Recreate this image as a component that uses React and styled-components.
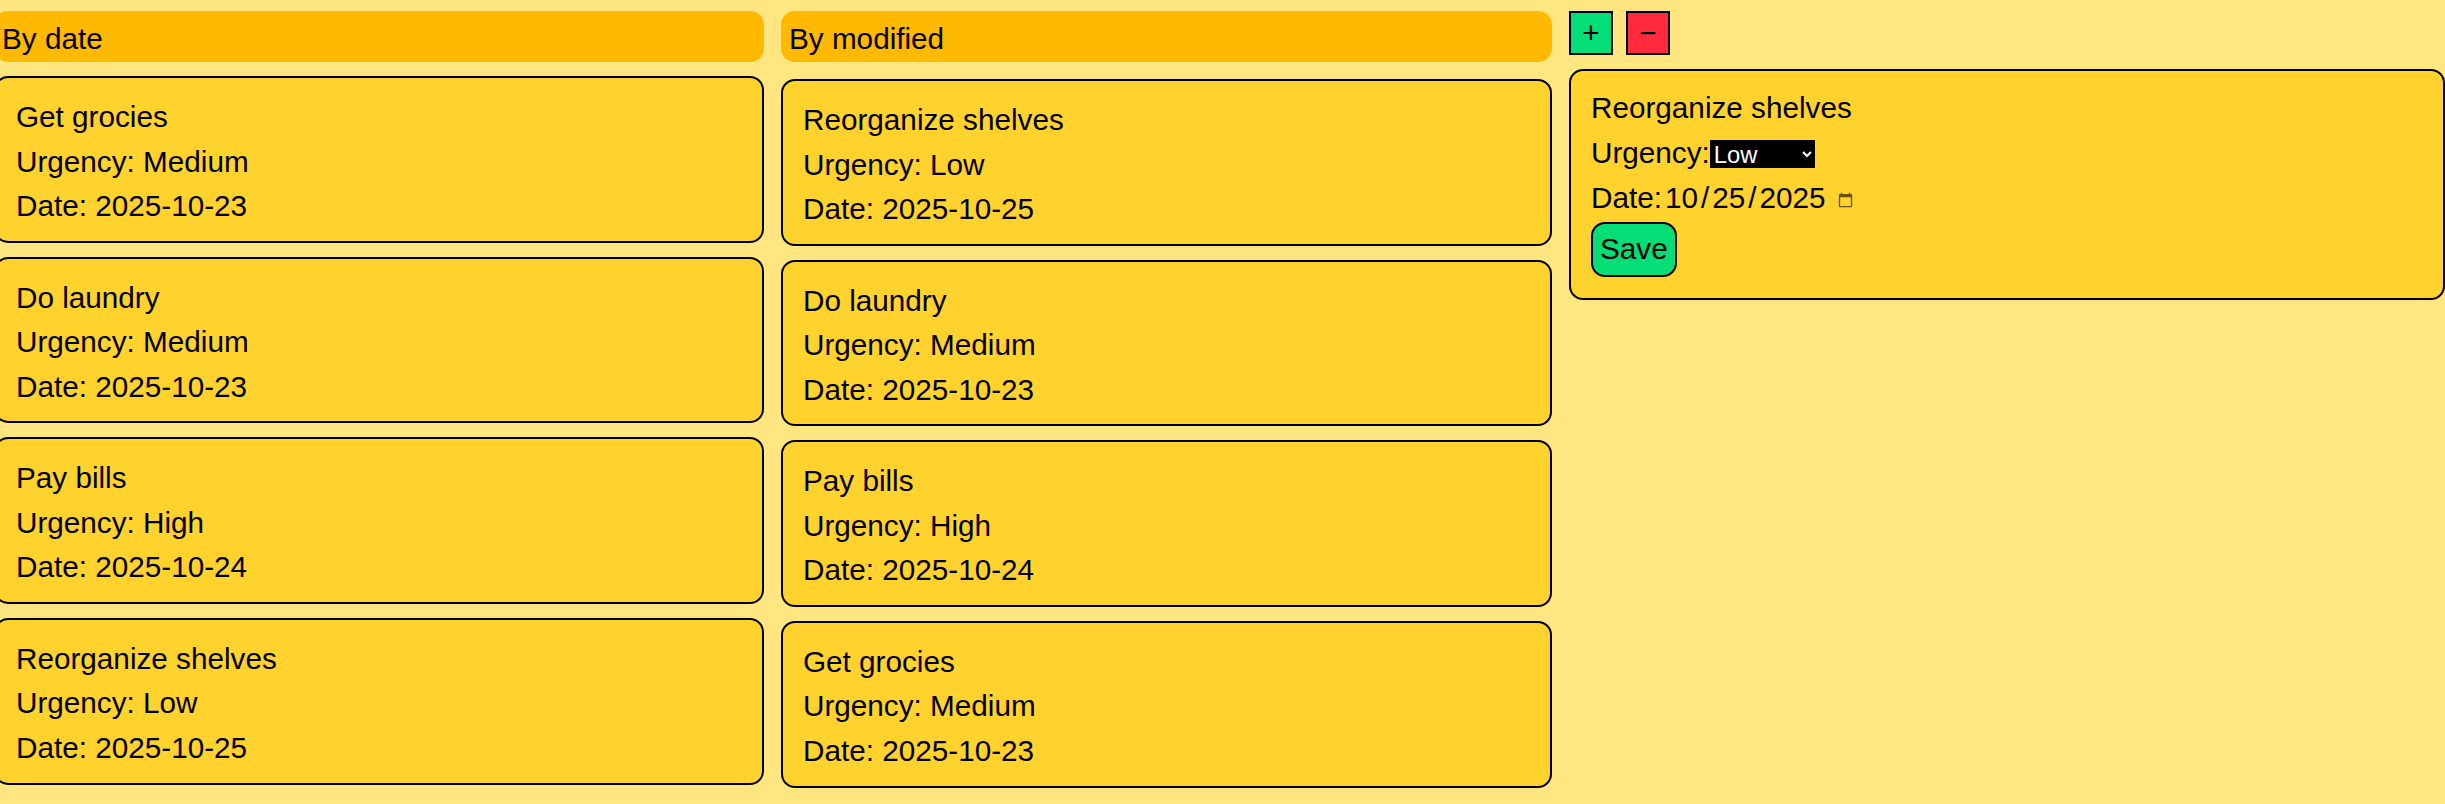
import React, { useState } from 'react'
import styled, { createGlobalStyle } from 'styled-components'

const GlobalStyle = createGlobalStyle`
  html, body {
    margin: 0;
    padding: 0;
    background: #ffe680;
  }
  body {
    font-family: "Liberation Sans", Arial, sans-serif;
    font-size: 29.7px;
    line-height: 1.5;
    color: #000;
    overflow: hidden;
  }
`

const Board = styled.div`
  display: grid;
  grid-template-columns: 770px 771px 876px;
  column-gap: 17px;
  align-items: start;
  margin-left: -6px;
  padding-top: 11px;
`

const Column = styled.section`
  display: flex;
  flex-direction: column;
`

const ColumnHeader = styled.h2`
  margin: 0;
  height: 51px;
  box-sizing: border-box;
  padding: 6px 8px 0;
  background: #ffb900;
  border-radius: 14px;
  font-size: inherit;
  font-weight: normal;
  line-height: 1.5;
`

const CardList = styled.div`
  display: flex;
  flex-direction: column;
  gap: 14px;
  margin-top: ${(p) => p.$offset || 14}px;
`

const Card = styled.div`
  background: #ffd22e;
  border: 2px solid #000;
  border-radius: 14px;
  padding: ${(p) => (p.$editing ? '15px 20px 21px' : '17px 20px 12px')};
`

const Line = styled.div`
  display: flex;
  align-items: baseline;
  white-space: nowrap;
`

const Toolbar = styled.div`
  display: flex;
  gap: 13px;
  margin-bottom: 14px;
`

const SquareButton = styled.button`
  width: 44px;
  height: 44px;
  padding: 0;
  border: 2px solid #000;
  border-radius: 0;
  background: ${(p) => (p.$danger ? '#ff2b3c' : '#05dd77')};
  color: #000;
  font-family: inherit;
  font-size: 29.7px;
  line-height: 1;
  cursor: pointer;
`

const UrgencySelect = styled.select`
  font-family: inherit;
  font-size: 23.8px;
  background: #000;
  color: #fff;
  border: none;
  border-radius: 0;
  padding: 0;
  margin: 0;
  height: 28px;
`

const DateInput = styled.input`
  font-family: inherit;
  font-size: 29.7px;
  background: transparent;
  border: none;
  padding: 0 0 0 2px;
  margin: 0;
  width: 190px;
  color: #000;
  line-height: 1.5;

  &::-webkit-datetime-edit-text {
    padding: 0 2px;
  }
  &::-webkit-calendar-picker-indicator {
    width: 17px;
    height: 18px;
    padding: 0;
    margin: 5px 0 0 0;
    opacity: 0.6;
  }
`

const SaveButton = styled.button`
  height: 55px;
  padding: 0 7px;
  background: #05dd77;
  border: 2px solid #000;
  border-radius: 14px;
  color: #000;
  font-family: inherit;
  font-size: 29.7px;
  cursor: pointer;
`

const byDate = [
  { title: 'Get grocies', urgency: 'Medium', date: '2025-10-23' },
  { title: 'Do laundry', urgency: 'Medium', date: '2025-10-23' },
  { title: 'Pay bills', urgency: 'High', date: '2025-10-24' },
  { title: 'Reorganize shelves', urgency: 'Low', date: '2025-10-25' },
]

const byModified = [
  { title: 'Reorganize shelves', urgency: 'Low', date: '2025-10-25' },
  { title: 'Do laundry', urgency: 'Medium', date: '2025-10-23' },
  { title: 'Pay bills', urgency: 'High', date: '2025-10-24' },
  { title: 'Get grocies', urgency: 'Medium', date: '2025-10-23' },
]

function TaskCard({ task }) {
  return (
    <Card>
      <Line>{task.title}</Line>
      <Line>Urgency: {task.urgency}</Line>
      <Line>Date: {task.date}</Line>
    </Card>
  )
}

function TaskColumn({ title, tasks, offset }) {
  return (
    <Column>
      <ColumnHeader>{title}</ColumnHeader>
      <CardList $offset={offset}>
        {tasks.map((t, i) => (
          <TaskCard key={i} task={t} />
        ))}
      </CardList>
    </Column>
  )
}

function Editor() {
  const [urgency, setUrgency] = useState('Low')
  const [date, setDate] = useState('2025-10-25')

  return (
    <Column>
      <Toolbar>
        <SquareButton>+</SquareButton>
        <SquareButton $danger>−</SquareButton>
      </Toolbar>
      <Card $editing>
        <Line>Reorganize shelves</Line>
        <Line>
          Urgency:
          <UrgencySelect value={urgency} onChange={(e) => setUrgency(e.target.value)}>
            <option>Low</option>
            <option>Medium</option>
            <option>High</option>
          </UrgencySelect>
        </Line>
        <Line>
          Date:
          <DateInput type="date" value={date} onChange={(e) => setDate(e.target.value)} />
        </Line>
        <SaveButton>Save</SaveButton>
      </Card>
    </Column>
  )
}

export default function App() {
  return (
    <>
      <GlobalStyle />
      <Board>
        <TaskColumn title="By date" tasks={byDate} />
        <TaskColumn title="By modified" tasks={byModified} offset={17} />
        <Editor />
      </Board>
    </>
  )
}
